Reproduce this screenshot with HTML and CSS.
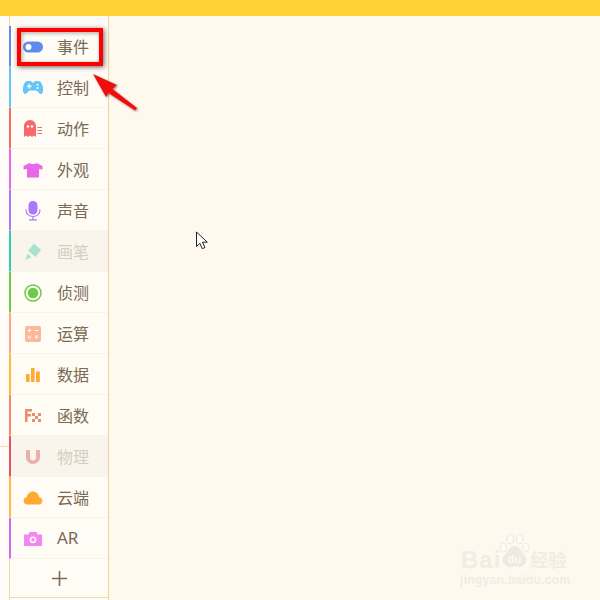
FILE: index.html
```html
<!DOCTYPE html>
<html lang="zh">
<head>
<meta charset="utf-8">
<title>积木分类</title>
<link rel="stylesheet" href="styles.css">
</head>
<body>
<header class="topbar"></header>
<main class="workspace">
  <div class="gutter"><span class="gutter-line"></span></div>
  <nav class="sidebar">
    <div class="spacer"></div>
    <div class="item c-event"><span class="icon"><svg viewBox="0 0 22 14" width="22" height="14"><rect x="1" y="1.500" width="20" height="11" rx="5.500" fill="#5d8bef"/><circle cx="6.500" cy="7" r="3" fill="#fffbf5"/></svg></span><span class="label">事件</span></div>
    <div class="item c-control"><span class="icon"><svg viewBox="0 0 22 16" width="22" height="16"><path d="M6 1h3l1 1.500h2L13 1h3c3 0 4.500 3 5 7 .4 3.500-.5 6-2.300 6-1.700 0-2.700-2.700-4.200-3.500h-7C6 11.300 5 14 3.300 14 1.500 14 .6 11.500 1 8c.5-4 2-7 5-7z" fill="#62c6fb"/><path d="M5 5.500h1.500V4h1.500v1.500h1.500V7H8v1.500H6.500V7H5z" fill="#fffbf5"/><circle cx="15.500" cy="4.800" r="1" fill="#fffbf5"/><circle cx="15.500" cy="8" r="1" fill="#fffbf5"/></svg></span><span class="label">控制</span></div>
    <div class="item c-motion"><span class="icon"><svg viewBox="0 0 18 17" width="18" height="17"><path d="M0 17V6.500C0 3 2.200 0 6 0s6 3 6 6.500V17l-2-1.500L8 17l-2-1.500L4 17l-2-1.500z" fill="#f66a6c"/><circle cx="4" cy="6.500" r="1.200" fill="#fffbf5"/><circle cx="8" cy="6.500" r="1.200" fill="#fffbf5"/><path d="M13.500 7.500h4.500M13.500 10.500h4.500M13.500 13.500h4.500" stroke="#f66a6c" stroke-width="1"/></svg></span><span class="label">动作</span></div>
    <div class="item c-looks"><span class="icon"><svg viewBox="0 0 20 16" width="20" height="16"><path d="M6.500 1C7.500 2.300 12.500 2.300 13.500 1L19.500 4v3.500l-3.500-.5V15.500H4V7l-3.500.5V4z" fill="#e868ea"/></svg></span><span class="label">外观</span></div>
    <div class="item c-sound"><span class="icon"><svg viewBox="0 0 16 20" width="16" height="20"><rect x="3.500" y="0" width="9" height="13.500" rx="4.500" fill="#a878fb"/><path d="M1 8.500c0 4.500 3 7 7 7s7-2.500 7-7M8 15.500v3M4 18.800h8" fill="none" stroke="#a878fb" stroke-width="1.200"/></svg></span><span class="label">声音</span></div>
    <div class="item muted c-pen"><span class="icon"><svg viewBox="0 0 18 18" width="18" height="18"><path d="M10 0.500l7 6.500-5.500 7-7.500-6.500z" fill="#a8e3cf"/><path d="M3.500 10.500l4 3.500-6 3z" fill="#a8e3cf"/></svg></span><span class="label">画笔</span></div>
    <div class="item c-sense"><span class="icon"><svg viewBox="0 0 18 18" width="18" height="18"><circle cx="9" cy="9" r="8" fill="none" stroke="#6ccb49" stroke-width="1.500"/><circle cx="9" cy="9" r="5.300" fill="#6ccb49"/></svg></span><span class="label">侦测</span></div>
    <div class="item c-math"><span class="icon"><svg viewBox="0 0 16 16" width="16" height="16"><rect width="16" height="16" rx="2" fill="#fcb79c"/><path d="M2.500 4.500h4M4.500 2.500v4M9.500 4.500h4M2.800 9.800l3.400 3M6.200 9.800l-3.400 3M9.500 11h4M11.500 9v4" stroke="#fffbf5" stroke-width="1"/></svg></span><span class="label">运算</span></div>
    <div class="item c-data"><span class="icon"><svg viewBox="0 0 14 14" width="14" height="14"><rect y="6" width="3.600" height="8" fill="#ffaa30"/><rect x="5" y="0" width="3.600" height="14" fill="#ffaa30"/><rect x="10" y="3.500" width="3.800" height="10.500" fill="#ffaa30"/></svg></span><span class="label">数据</span></div>
    <div class="item c-func"><span class="icon"><svg viewBox="0 0 16 13" width="16" height="13"><path d="M0 0h7v2.500H2.500v2.500H6v2.500H2.500V13H0z" fill="#ea8c6b"/><path d="M7 4h3v3H7zM13 4h3v3h-3zM10 7h3v3h-3zM7 10h3v3H7zM13 10h3v3h-3z" fill="#ea8c6b"/></svg></span><span class="label">函数</span></div>
    <div class="item muted c-physics"><span class="icon"><svg viewBox="0 0 14 14" width="14" height="14"><path d="M0 0h4v7.500a3 3 0 006 0V0h4v7.500a7 6.500 0 01-14 0z" fill="#eab0a8"/></svg></span><span class="label">物理</span></div>
    <div class="item c-cloud"><span class="icon"><svg viewBox="0 0 20 14" width="20" height="14"><path d="M4 13.500a3.700 3.700 0 01-.5-7.300C4.500 2.800 7 .5 10 .5s5.500 2.300 6.300 5.700a3.700 3.700 0 01-.3 7.300z" fill="#ffaa30"/></svg></span><span class="label">云端</span></div>
    <div class="item c-ar"><span class="icon"><svg viewBox="0 0 18 14" width="18" height="14"><path d="M0 2.500h4.500L5.500 0h7l1 2.500H18V14H0z" fill="#f584f5"/><circle cx="9" cy="7.800" r="3.400" fill="#fffbf5"/><circle cx="9" cy="7.800" r="1.700" fill="#f584f5"/></svg></span><span class="label label-latin">AR</span></div>
    <div class="add"><svg viewBox="0 0 15 15" width="15" height="15"><path d="M7.500 0v15M0 7.500h15" stroke="#7a6a54" stroke-width="1.600"/></svg></div>
  </nav>
  <section class="canvas"></section>
</main>

<div class="callout"></div>
<svg class="arrow" viewBox="0 0 50 45" width="50" height="45"><defs><filter id="s" x="-20%" y="-20%" width="140%" height="140%"><feDropShadow dx="1" dy="1" stdDeviation="1.200" flood-color="#000" flood-opacity=".45"/></filter></defs><path d="M1 0L25 11 20.500 15 45 34 43 36.500 16.500 19 14 23z" fill="#f00b0b" filter="url(#s)"/></svg>
<svg class="cursor" viewBox="0 0 14 20" width="14" height="20"><path d="M1.500 1v14.500l3.400-3.200 2.400 5.400 2.600-1.200-2.400-5.300h4.800z" fill="#fff" stroke="#222" stroke-width="1"/></svg>

<div class="watermark">
  <div class="wm-top">
    <span class="wm-bai">Bai</span>
    <svg class="wm-paw" viewBox="0 0 36 40" width="31" height="34"><g fill="#fffaf3" stroke="#e8e3dc" stroke-width="1"><ellipse cx="5" cy="16" rx="3.500" ry="5"/><ellipse cx="13" cy="6" rx="4" ry="5.500"/><ellipse cx="24" cy="6" rx="4" ry="5.500"/><ellipse cx="31" cy="16" rx="3.500" ry="5"/><path d="M18 15c6 0 7 6 11 10 5 5 1 13-5 13-3 0-4-1-6-1s-3 1-6 1c-6 0-10-8-5-13 4-4 5-10 11-10z" fill="#eee9e1"/></g><text x="18" y="34" class="wm-du">du</text></svg>
    <span class="wm-cn">经验</span>
  </div>
  <div class="wm-url">jingyan.baidu.com</div>
</div>
</body>
</html>
```

FILE: styles.css
```css
* { box-sizing: border-box; }
html, body { margin: 0; padding: 0; }
body {
  width: 600px;
  height: 600px;
  overflow: hidden;
  position: relative;
  background: #fff8ee;
  font-family: "Noto Sans CJK SC", "Liberation Sans", sans-serif;
}
.topbar { height: 16px; background: #ffd236; }
.workspace { display: flex; height: 584px; }
.gutter { width: 9px; background: #fffbf6; padding-top: 430px; }
.gutter-line { display: block; height: 1px; background: #f6dcb4; }
.sidebar {
  width: 100px;
  background: #fffbf5;
  border-left: 1px solid #f0d8a8;
  border-right: 1px solid #f0d49c;
  display: flex;
  flex-direction: column;
}
.spacer { height: 10px; }
.item {
  height: 41px;
  display: flex;
  align-items: center;
  padding-top: 1px;
  border-left: 2px solid transparent;
  margin-left: -1px;
  border-bottom: 1px solid #faf4e6;
  color: #7a6a54;
  font-size: 16px;
}
.icon { width: 44px; display: flex; justify-content: center; }
.label { line-height: 20px; margin: 0 0 2px 2px; }
.label-latin { font: 17px/20px "Noto Sans", "Liberation Sans", sans-serif; }
.muted { background: #f9f5ec; }
.muted .label { color: #d6cdbf; }
.c-event { border-left-color: #5d8bef; }
.c-control { border-left-color: #62c6fb; }
.c-motion { border-left-color: #f66a6c; }
.c-looks { border-left-color: #e868ea; }
.c-sound { border-left-color: #a878fb; }
.c-pen { border-left-color: #2ecbb0; }
.c-sense { border-left-color: #6ccb49; }
.c-math { border-left-color: #fca78c; }
.c-data { border-left-color: #ffb938; }
.c-func { border-left-color: #f78a6e; }
.c-physics { border-left-color: #e95060; }
.c-cloud { border-left-color: #ffb64a; }
.c-ar { border-left-color: #cc6cf5; }
.add {
  height: 39px;
  display: flex;
  align-items: center;
  justify-content: center;
  border-bottom: 1px solid #f0d8a8;
}
.canvas { flex: 1; }

.callout {
  position: absolute;
  left: 17px;
  top: 28px;
  width: 86px;
  height: 38px;
  border: 4px solid #f00;
  box-shadow: 1px 1px 5px rgba(0, 0, 0, .6), inset 1px 1px 4px rgba(0, 0, 0, .35);
}
.arrow { position: absolute; left: 92px; top: 74px; }
.cursor { position: absolute; left: 195px; top: 231px; }

.watermark {
  position: absolute;
  left: 460px;
  top: 534px;
  width: 120px;
  color: #f1ece4;
}
.wm-top { display: flex; align-items: flex-end; height: 34px; white-space: nowrap; }
.wm-bai {
  font: bold 24px/24px "Liberation Sans", sans-serif;
  letter-spacing: 1px;
  margin-left: 1px;
  margin-bottom: -4px;
  flex: none;
}
.wm-paw { margin-left: -2px; flex: none; }
.wm-du { font: bold 13px "Liberation Sans", sans-serif; fill: #fffaf3; stroke: none; text-anchor: middle; }
.wm-cn { font-size: 18px; line-height: 18px; font-weight: 700; flex: none; }
.wm-url {
  font: bold 12px/14px "Liberation Sans", sans-serif;
  letter-spacing: .3px;
  margin-top: 5px;
  white-space: nowrap;
}
```
